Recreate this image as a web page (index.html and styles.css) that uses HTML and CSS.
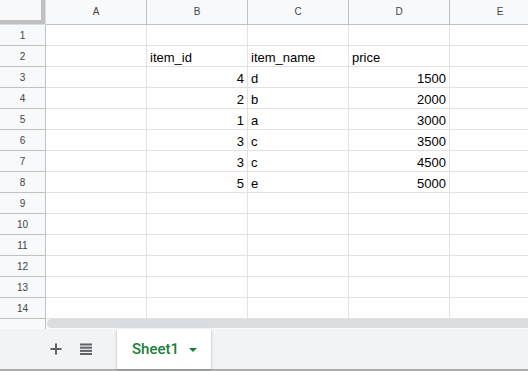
FILE: index.html
```html
<!DOCTYPE html>
<html lang="en">
<head>
    <meta charset="UTF-8">
    <title>Sheet1</title>
    <link rel="stylesheet" href="styles.css">
</head>
<body>
    <div class="sheet">
        <div class="grid">
            <div class="corner"></div>
            <div class="col-head">A</div>
            <div class="col-head">B</div>
            <div class="col-head">C</div>
            <div class="col-head">D</div>
            <div class="col-head">E</div>

            <div class="row-head">1</div>
            <div class="cell"></div><div class="cell"></div><div class="cell"></div><div class="cell"></div><div class="cell"></div>

            <div class="row-head">2</div>
            <div class="cell"></div><div class="cell">item_id</div><div class="cell">item_name</div><div class="cell">price</div><div class="cell"></div>

            <div class="row-head">3</div>
            <div class="cell"></div><div class="cell num">4</div><div class="cell">d</div><div class="cell num">1500</div><div class="cell"></div>

            <div class="row-head">4</div>
            <div class="cell"></div><div class="cell num">2</div><div class="cell">b</div><div class="cell num">2000</div><div class="cell"></div>

            <div class="row-head">5</div>
            <div class="cell"></div><div class="cell num">1</div><div class="cell">a</div><div class="cell num">3000</div><div class="cell"></div>

            <div class="row-head">6</div>
            <div class="cell"></div><div class="cell num">3</div><div class="cell">c</div><div class="cell num">3500</div><div class="cell"></div>

            <div class="row-head">7</div>
            <div class="cell"></div><div class="cell num">3</div><div class="cell">c</div><div class="cell num">4500</div><div class="cell"></div>

            <div class="row-head">8</div>
            <div class="cell"></div><div class="cell num">5</div><div class="cell">e</div><div class="cell num">5000</div><div class="cell"></div>

            <div class="row-head">9</div>
            <div class="cell"></div><div class="cell"></div><div class="cell"></div><div class="cell"></div><div class="cell"></div>

            <div class="row-head">10</div>
            <div class="cell"></div><div class="cell"></div><div class="cell"></div><div class="cell"></div><div class="cell"></div>

            <div class="row-head">11</div>
            <div class="cell"></div><div class="cell"></div><div class="cell"></div><div class="cell"></div><div class="cell"></div>

            <div class="row-head">12</div>
            <div class="cell"></div><div class="cell"></div><div class="cell"></div><div class="cell"></div><div class="cell"></div>

            <div class="row-head">13</div>
            <div class="cell"></div><div class="cell"></div><div class="cell"></div><div class="cell"></div><div class="cell"></div>

            <div class="row-head">14</div>
            <div class="cell"></div><div class="cell"></div><div class="cell"></div><div class="cell"></div><div class="cell"></div>
        </div>

        <div class="scroll-row">
            <div class="scroll-corner"></div>
            <div class="scroll-track"><div class="scroll-thumb"></div></div>
        </div>

        <div class="tab-bar">
            <button class="tab-btn" title="Add sheet">
                <svg width="12" height="12" viewBox="0 0 12 12">
                    <rect x="5" y="0.5" width="2" height="11" fill="#5f6368"/>
                    <rect x="0.5" y="5" width="11" height="2" fill="#5f6368"/>
                </svg>
            </button>
            <button class="tab-btn" title="All sheets">
                <svg width="12" height="12" viewBox="0 0 12 12">
                    <rect x="0" y="0.5" width="12" height="2" fill="#5f6368"/>
                    <rect x="0" y="3.7" width="12" height="2" fill="#5f6368"/>
                    <rect x="0" y="6.9" width="12" height="2" fill="#5f6368"/>
                    <rect x="0" y="10" width="12" height="2" fill="#5f6368"/>
                </svg>
            </button>
            <div class="sheet-tab">
                <span>Sheet1</span>
                <span class="caret"></span>
            </div>
        </div>
    </div>
</body>
</html>
```

FILE: styles.css
```css
body {
    margin: 0;
    font-family: 'Liberation Sans', Arial, sans-serif;
    background: #fff;
    overflow: hidden;
}

.sheet {
    width: 528px;
    height: 371px;
    overflow: hidden;
}

.grid {
    display: grid;
    grid-template-columns: 46px repeat(5, 101px);
    grid-auto-rows: 21px;
    grid-template-rows: 25px;
}

.corner {
    background: #f8f9fa;
    box-shadow: inset -1px -1px 0 #dadce0, inset -5px -5px 0 #c0c0c0;
}

.col-head {
    box-sizing: border-box;
    background: #f8f9fa;
    border-right: 1px solid #c0c0c0;
    border-bottom: 1px solid #c0c0c0;
    color: #444;
    font-size: 10px;
    line-height: 24px;
    text-align: center;
}

.row-head {
    box-sizing: border-box;
    background: #f8f9fa;
    border-right: 1px solid #c0c0c0;
    border-bottom: 1px solid #c0c0c0;
    color: #444;
    font-size: 10px;
    line-height: 21px;
    text-align: center;
}

.cell {
    box-sizing: border-box;
    border-right: 1px solid #e2e2e3;
    border-bottom: 1px solid #e2e2e3;
    padding: 1px 3px 0;
    font-size: 13px;
    line-height: 21px;
    color: #000;
    white-space: nowrap;
    overflow: hidden;
}

.cell.num {
    text-align: right;
}

.scroll-row {
    display: grid;
    grid-template-columns: 46px 1fr;
    height: 10px;
}

.scroll-corner {
    box-sizing: border-box;
    background: #f8f9fa;
    border-right: 1px solid #c0c0c0;
}

.scroll-track {
    padding: 0 0 1px 1px;
    background: #f8f9fa;
}

.scroll-thumb {
    height: 9px;
    background: #dadce0;
    border-radius: 5px 0 0 5px;
}

.tab-bar {
    display: flex;
    align-items: center;
    height: 40px;
    background: #f1f3f4;
    border-bottom: 2px solid #ababab;
}

.tab-btn {
    display: flex;
    align-items: center;
    justify-content: center;
    width: 30px;
    height: 30px;
    padding: 0;
    border: none;
    background: none;
}

.tab-btn:first-child {
    margin-left: 41px;
}

.sheet-tab {
    display: flex;
    align-items: center;
    align-self: stretch;
    margin-left: 16px;
    width: 94px;
    box-sizing: border-box;
    padding-left: 15px;
    background: #fff;
    box-shadow: 0 1px 3px rgba(60, 64, 67, 0.3);
    color: #188038;
    font-family: Roboto, 'Liberation Sans', sans-serif;
    font-weight: 500;
    font-size: 15px;
}

.caret {
    margin-left: 10px;
    margin-top: 1px;
    border-left: 4px solid transparent;
    border-right: 4px solid transparent;
    border-top: 4px solid #188038;
}
```
